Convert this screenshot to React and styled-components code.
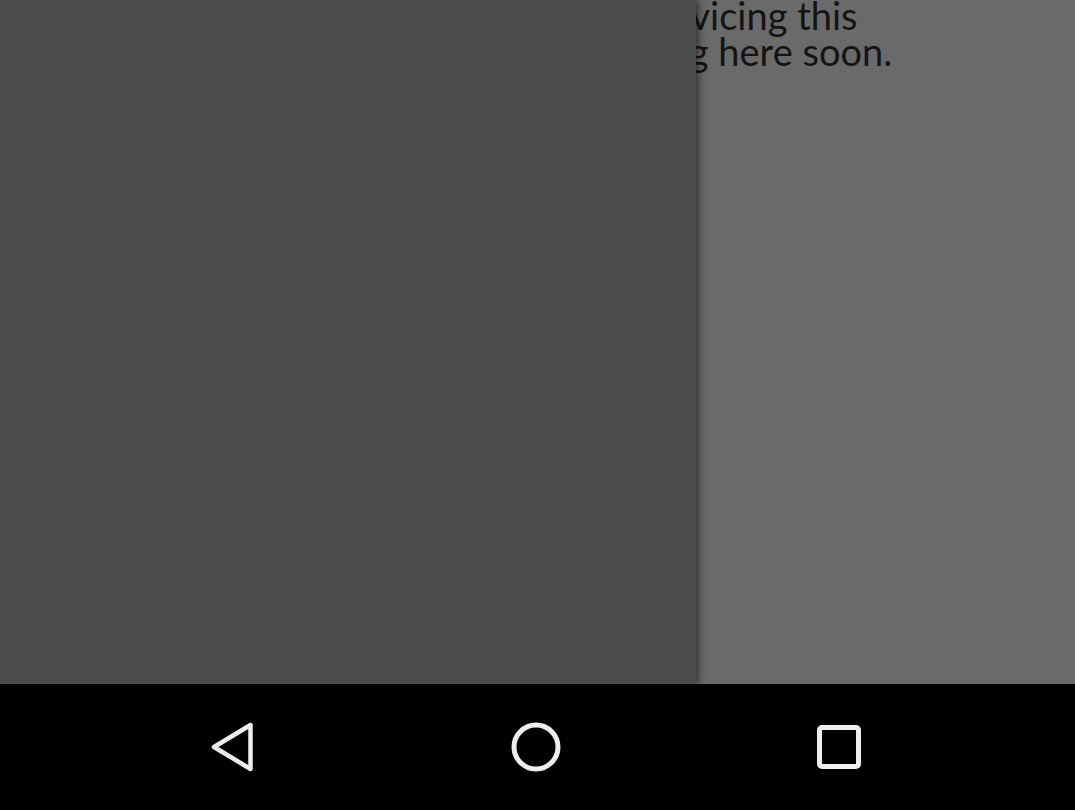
import React from "react";
import styled, { createGlobalStyle } from "styled-components";

const GlobalStyle = createGlobalStyle`
  html, body {
    margin: 0;
    padding: 0;
    width: 100%;
    height: 100%;
    overflow: hidden;
    background: #000;
  }
  #root {
    height: 100%;
  }
`;

const Phone = styled.div`
  width: 1075px;
  height: 810px;
  display: flex;
  flex-direction: column;
  font-family: Lato, "Open Sans", sans-serif;
`;

const Screen = styled.div`
  position: relative;
  flex: 1;
  overflow: hidden;
  background-color: #6a6a6a;
`;

const Content = styled.div`
  display: flex;
  justify-content: center;
  padding-right: 36px;
`;

const Message = styled.p`
  margin: -3px 0 0;
  font-size: 38px;
  line-height: 36px;
  color: #141414;
  text-align: center;
  white-space: pre;
`;

const Drawer = styled.div`
  position: absolute;
  top: 0;
  left: 0;
  bottom: 0;
  width: 696px;
  background-color: #4b4b4b;
  box-shadow: 2px 0 6px rgba(0, 0, 0, 0.45), 6px 0 8px rgba(0, 0, 0, 0.12);
`;

const NavBar = styled.div`
  height: 126px;
  background-color: #000;
  display: flex;
  align-items: center;
  justify-content: space-between;
  padding: 0 206px 0 202px;
`;

const NavButton = styled.div`
  width: 60px;
  height: 60px;
  display: flex;
  align-items: center;
  justify-content: center;
`;

function BackIcon() {
  return (
    <svg width="60" height="60" viewBox="0 0 60 60">
      <path
        d="M12 30 L48.5 8 L48.5 52 Z"
        fill="none"
        stroke="#eeeeee"
        strokeWidth="4.5"
        strokeLinejoin="round"
      />
    </svg>
  );
}

function HomeIcon() {
  return (
    <svg width="60" height="60" viewBox="0 0 60 60">
      <circle cx="30" cy="30" r="22" fill="none" stroke="#eeeeee" strokeWidth="5" />
    </svg>
  );
}

function RecentsIcon() {
  return (
    <svg width="60" height="60" viewBox="0 0 60 60">
      <rect
        x="10.5"
        y="10.5"
        width="39"
        height="39"
        rx="2.5"
        fill="none"
        stroke="#eeeeee"
        strokeWidth="5"
      />
    </svg>
  );
}

export default function App() {
  return (
    <>
      <GlobalStyle />
      <Phone>
        <Screen>
          <Content>
            <Message>
              {"Sorry, our team is currently servicing this\nfeature. Something new is coming here soon."}
            </Message>
          </Content>
          <Drawer />
        </Screen>
        <NavBar>
          <NavButton>
            <BackIcon />
          </NavButton>
          <NavButton>
            <HomeIcon />
          </NavButton>
          <NavButton>
            <RecentsIcon />
          </NavButton>
        </NavBar>
      </Phone>
    </>
  );
}
